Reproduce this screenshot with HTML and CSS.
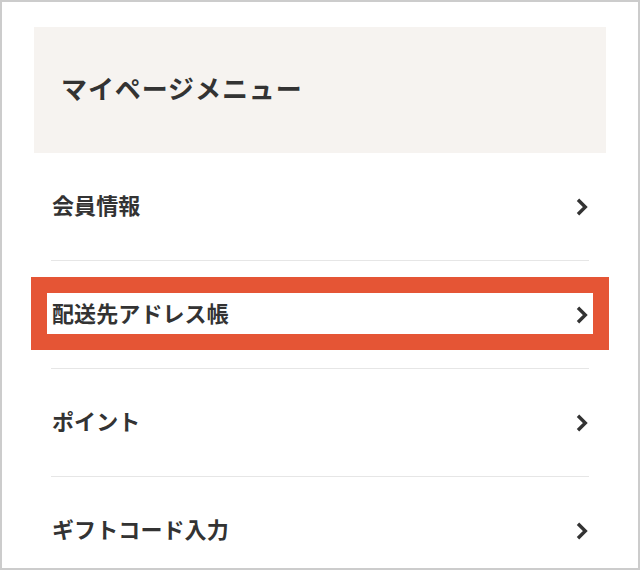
FILE: index.html
```html
<!DOCTYPE html>
<html lang="ja">
<head>
<meta charset="utf-8">
<title>マイページメニュー</title>
<link rel="stylesheet" href="styles.css">
</head>
<body>
<div class="frame">
  <div class="menu-head">
    <h2 class="menu-title">マイページメニュー</h2>
  </div>
  <ul class="menu-list">
    <li class="menu-item">
      <span class="menu-label">会員情報</span>
      <svg class="chev" width="12" height="18" viewBox="0 0 12 18"><path d="M2 1.8 L9.3 9 L2 16.2" fill="none" stroke="#333" stroke-width="3.4"/></svg>
    </li>
    <li class="menu-item">
      <span class="menu-label">配送先アドレス帳</span>
      <svg class="chev" width="12" height="18" viewBox="0 0 12 18"><path d="M2 1.8 L9.3 9 L2 16.2" fill="none" stroke="#333" stroke-width="3.4"/></svg>
      <div class="highlight"></div>
    </li>
    <li class="menu-item">
      <span class="menu-label">ポイント</span>
      <svg class="chev" width="12" height="18" viewBox="0 0 12 18"><path d="M2 1.8 L9.3 9 L2 16.2" fill="none" stroke="#333" stroke-width="3.4"/></svg>
    </li>
    <li class="menu-item">
      <span class="menu-label">ギフトコード入力</span>
      <svg class="chev" width="12" height="18" viewBox="0 0 12 18"><path d="M2 1.8 L9.3 9 L2 16.2" fill="none" stroke="#333" stroke-width="3.4"/></svg>
    </li>
  </ul>
</div>
</body>
</html>
```

FILE: styles.css
```css
* { box-sizing: border-box; }
html, body { margin: 0; padding: 0; background: #fff; }
body {
  font-family: "Noto Sans CJK JP", "Noto Sans", sans-serif;
  color: #333;
}
.frame {
  width: 640px;
  height: 570px;
  border: 2px solid #cccccc;
  overflow: hidden;
  padding: 25px 32px 0 32px;
}
.menu-head {
  background: #f6f3f0;
  height: 126px;
  display: flex;
  align-items: center;
  padding-left: 27px;
}
.menu-title {
  margin: 0;
  padding-bottom: 4px;
  font-size: 26px;
  font-weight: 700;
  letter-spacing: 0.9px;
  line-height: 1;
}
.menu-list {
  list-style: none;
  margin: 0 17px;
  padding: 0;
}
.menu-item {
  position: relative;
  height: 108px;
  border-bottom: 1px solid #e6e6e6;
  display: flex;
  align-items: center;
  justify-content: space-between;
  padding: 0 1px 0 1px;
}
.menu-label {
  padding-bottom: 6px;
  font-size: 22px;
  font-weight: 700;
  letter-spacing: 0.1px;
  line-height: 1;
}
.chev { display: block; }
.highlight {
  position: absolute;
  left: -20px;
  right: -20px;
  top: 16px;
  height: 73px;
  border: 16px solid #e55535;
  pointer-events: none;
}
```
